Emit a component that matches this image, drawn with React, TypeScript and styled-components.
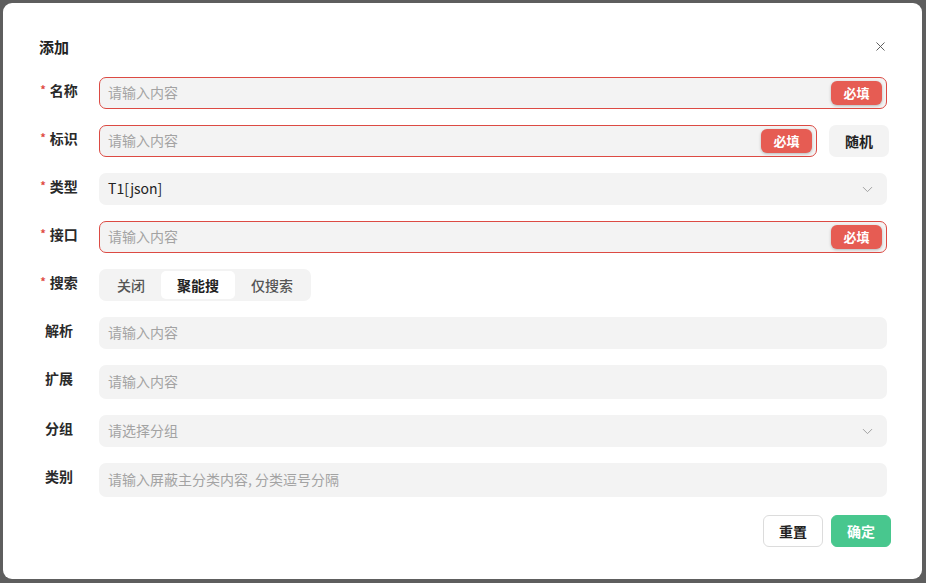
import styled, { createGlobalStyle } from "styled-components";
import { ChevronDown, X } from "lucide-react";

const GlobalStyle = createGlobalStyle`
  html, body {
    margin: 0;
    padding: 0;
    background: #5e5e5e;
    font-family: "Noto Sans CJK SC", "Noto Sans", sans-serif;
  }
  * { box-sizing: border-box; }
`;

const Page = styled.div`
  width: 926px;
  height: 583px;
  padding: 3px 4px 4px 3px;
`;

const Dialog = styled.div`
  width: 919px;
  height: 576px;
  background: #fff;
  border-radius: 9px;
  padding: 29px 31px 0 36px;
  display: flex;
  flex-direction: column;
`;

const Header = styled.div`
  height: 29px;
  display: flex;
  align-items: center;
  justify-content: space-between;
  padding-right: 4px;
`;

const Title = styled.div`
  font-size: 15px;
  font-weight: 700;
  color: #222;
`;

const Close = styled.div`
  width: 16px;
  height: 16px;
  display: flex;
  align-items: center;
  justify-content: center;
  color: #555;
  margin-right: -1px;
`;

const Form = styled.div`
  margin-top: 16px;
  margin-right: 4px;
  display: flex;
  flex-direction: column;
  gap: 16px;
`;

const Row = styled.div`
  display: flex;
  align-items: flex-start;
  gap: 20px;
`;

const Label = styled.div`
  width: 40px;
  flex-shrink: 0;
  text-align: center;
  white-space: nowrap;
  font-size: 14px;
  font-weight: 700;
  color: #2a2a2a;
  line-height: 26px;
`;

const Star = styled.span`
  color: #e04b42;
  font-size: 11px;
  margin-right: 4px;
  position: relative;
  top: -2px;
`;

const Field = styled.div<{ $error?: boolean; $tall?: boolean }>`
  flex: 1;
  height: ${(p) => (p.$tall ? "34px" : "32px")};
  background: #f3f3f3;
  border-radius: 7px;
  border: 1px solid ${(p) => (p.$error ? "#dc4a43" : "transparent")};
  display: flex;
  align-items: center;
  padding: 0 4px 0 8px;
  font-size: 14px;
  line-height: 20px;
`;

const Placeholder = styled.span`
  flex: 1;
  color: #a3a3a3;
  position: relative;
  top: -1px;
`;

const Value = styled.span`
  flex: 1;
  color: #222;
  position: relative;
  top: -1px;
`;

const Badge = styled.span`
  height: 24px;
  width: 51px;
  border-radius: 6px;
  background: #e65c53;
  color: #fff;
  font-size: 13px;
  font-weight: 700;
  display: flex;
  align-items: center;
  justify-content: center;
  box-shadow: 0 1px 3px rgba(0, 0, 0, 0.25);
`;

const Chevron = styled.span`
  display: flex;
  color: #a0a0a0;
  margin-right: 6px;
`;

const SideButton = styled.div`
  width: 60px;
  height: 32px;
  margin-left: -8px;
  margin-right: -2px;
  border-radius: 7px;
  background: #f3f3f3;
  display: flex;
  align-items: center;
  justify-content: center;
  font-size: 14px;
  font-weight: 700;
  color: #222;
`;

const Segmented = styled.div`
  display: flex;
  padding: 2px;
  height: 32px;
  background: #f3f3f3;
  border-radius: 7px;
`;

const Segment = styled.div<{ $active?: boolean }>`
  padding: 0 16px;
  height: 28px;
  display: flex;
  align-items: center;
  font-size: 14px;
  font-weight: ${(p) => (p.$active ? 700 : 500)};
  color: ${(p) => (p.$active ? "#222" : "#555")};
  background: ${(p) => (p.$active ? "#fff" : "transparent")};
  border-radius: 5px;
`;

const Footer = styled.div`
  margin-top: 18px;
  display: flex;
  justify-content: flex-end;
  gap: 8px;
`;

const Button = styled.div<{ $primary?: boolean }>`
  width: 60px;
  height: 32px;
  border-radius: 6px;
  display: flex;
  align-items: center;
  justify-content: center;
  font-size: 14px;
  font-weight: 700;
  color: ${(p) => (p.$primary ? "#fff" : "#222")};
  background: ${(p) => (p.$primary ? "#48c78e" : "#fff")};
  border: 1px solid ${(p) => (p.$primary ? "#48c78e" : "#dcdcdc")};
`;

type FieldRowProps = {
  label: string;
  required?: boolean;
  children: React.ReactNode;
};

const FieldRow = ({ label, required, children }: FieldRowProps) => (
  <Row>
    <Label>
      {required && <Star>*</Star>}
      {label}
    </Label>
    {children}
  </Row>
);

export default function App() {
  return (
    <Page>
      <GlobalStyle />
      <Dialog>
        <Header>
          <Title>添加</Title>
          <Close>
            <X size={15} strokeWidth={1.5} />
          </Close>
        </Header>
        <Form>
          <FieldRow label="名称" required>
            <Field $error>
              <Placeholder>请输入内容</Placeholder>
              <Badge>必填</Badge>
            </Field>
          </FieldRow>
          <FieldRow label="标识" required>
            <Field $error>
              <Placeholder>请输入内容</Placeholder>
              <Badge>必填</Badge>
            </Field>
            <SideButton>随机</SideButton>
          </FieldRow>
          <FieldRow label="类型" required>
            <Field>
              <Value>T1[json]</Value>
              <Chevron>
                <ChevronDown size={17} strokeWidth={1.4} />
              </Chevron>
            </Field>
          </FieldRow>
          <FieldRow label="接口" required>
            <Field $error>
              <Placeholder>请输入内容</Placeholder>
              <Badge>必填</Badge>
            </Field>
          </FieldRow>
          <FieldRow label="搜索" required>
            <Segmented>
              <Segment>关闭</Segment>
              <Segment $active>聚能搜</Segment>
              <Segment>仅搜索</Segment>
            </Segmented>
          </FieldRow>
          <FieldRow label="解析">
            <Field>
              <Placeholder>请输入内容</Placeholder>
            </Field>
          </FieldRow>
          <FieldRow label="扩展">
            <Field $tall>
              <Placeholder>请输入内容</Placeholder>
            </Field>
          </FieldRow>
          <FieldRow label="分组">
            <Field>
              <Placeholder>请选择分组</Placeholder>
              <Chevron>
                <ChevronDown size={17} strokeWidth={1.4} />
              </Chevron>
            </Field>
          </FieldRow>
          <FieldRow label="类别">
            <Field $tall>
              <Placeholder>请输入屏蔽主分类内容, 分类逗号分隔</Placeholder>
            </Field>
          </FieldRow>
        </Form>
        <Footer>
          <Button>重置</Button>
          <Button $primary>确定</Button>
        </Footer>
      </Dialog>
    </Page>
  );
}
